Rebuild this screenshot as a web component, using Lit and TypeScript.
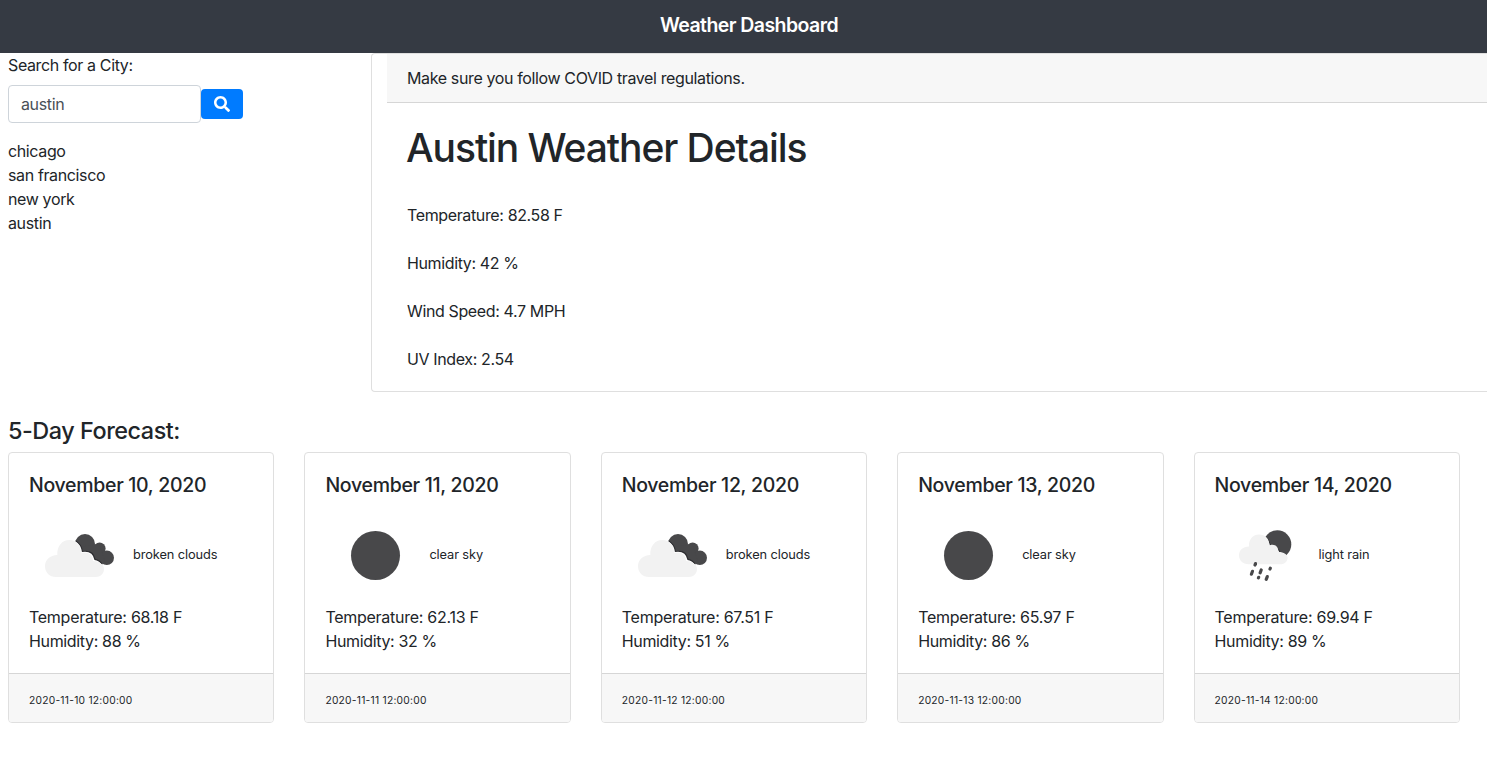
import { LitElement, html, css, svg } from "lit";
import { customElement, property } from "lit/decorators.js";

interface Day {
  title: string;
  icon: string;
  sky: string;
  temp: string;
  humidity: string;
  stamp: string;
}

const DAYS: Day[] = [
  { title: "November 10, 2020", icon: "broken", sky: "broken clouds", temp: "68.18", humidity: "88", stamp: "2020-11-10 12:00:00" },
  { title: "November 11, 2020", icon: "clear", sky: "clear sky", temp: "62.13", humidity: "32", stamp: "2020-11-11 12:00:00" },
  { title: "November 12, 2020", icon: "broken", sky: "broken clouds", temp: "67.51", humidity: "51", stamp: "2020-11-12 12:00:00" },
  { title: "November 13, 2020", icon: "clear", sky: "clear sky", temp: "65.97", humidity: "86", stamp: "2020-11-13 12:00:00" },
  { title: "November 14, 2020", icon: "rain", sky: "light rain", temp: "69.94", humidity: "89", stamp: "2020-11-14 12:00:00" },
];

const ICONS: Record<string, unknown> = {
  clear: svg`<circle cx="50.5" cy="50.5" r="24.5" fill="#48484a" />`,
  broken: svg`
    <g fill="#48484a">
      <circle cx="56" cy="39" r="10" />
      <circle cx="70.6" cy="43.4" r="6" />
      <circle cx="77.8" cy="52.8" r="7.2" />
      <path d="M50 42L70 39L77 59L64 58Z" />
    </g>
    <path fill="#2d2d30" d="M46.6 35.3Q52.8 39 53.8 46Q64.5 44 66.5 54Q70.5 54.5 73.800 59.200L62 60L45 48Z" />
    <path fill="#fff" d="M46.2 36.2Q52 39.500 52.900 47Q63.6 45.2 65.500 55Q70 55.500 73 60L60 64L42 48Z" />
    <path fill="#f2f2f2" d="M27 72C20.500 72 16 67.300 16 61.200C16 55 21 50.200 28.300 50C28 41 33 35 40.500 35C47.500 35 52.300 40.500 52.400 48.300C58.500 45.500 64 49.500 64 56C70 56 75 59.500 75 64C75 68.500 71.500 72 66.500 72Z" />`,
  rain: svg`
    <circle cx="62.300" cy="39.300" r="14" fill="#48484a" />
    <path fill="#2d2d30" d="M51 31.500Q55.500 36 56 43Q64 40.500 66 48.700Q70 49 72.200 53L62 56L48 47Z" />
    <path fill="#fff" d="M50.500 32Q54.800 36.500 55.300 44Q63.300 41.500 65.300 49.800Q70.500 50 73 55L62 60L46 47Z" />
    <path fill="#f2f2f2" d="M33.500 59.300C28 59.300 24 55.500 24 50.300C24 45.200 28 41.500 34 41.500C33.500 34.500 38 29.500 44 29.500C50.500 29.500 54.300 34 54.500 40.300C59.500 38.300 63.500 41.200 63.500 47C69 47 72.500 49.500 72.500 53C72.500 56.500 69.500 59.300 65.500 59.300Z" />
    <g stroke="#48484a" stroke-width="3.200" stroke-linecap="round">
      <path d="M40.500 58.600L40 60" />
      <path d="M37.500 66.300L36.400 69.200" />
      <path d="M46.200 65L45.100 67.800" />
      <path d="M43.700 72.300L43.400 72.900" />
      <path d="M55.300 63.200L55 64" />
      <path d="M52.300 71.600L51.200 74.300" />
    </g>`,
};

@customElement("forecast-card")
export class ForecastCard extends LitElement {
  @property({ attribute: false }) day!: Day;

  static styles = css`
    :host {
      display: flex;
      flex-direction: column;
      box-sizing: border-box;
      height: 271px;
      border: 1px solid #dfdfdf;
      border-radius: 4px;
      overflow: hidden;
      background: #fff;
    }
    .body {
      height: 220px;
      box-sizing: border-box;
      padding: 20px 20px 0;
    }
    .title {
      margin: 0 0 8px;
      font-size: 19.5px;
      line-height: 24px;
      font-weight: 550;
      letter-spacing: -0.3px;
      white-space: nowrap;
    }
    .sky {
      display: flex;
      align-items: center;
      height: 100px;
      gap: 4px;
      font-size: 12.8px;
      letter-spacing: -0.11px;
    }
    .icon {
      width: 100px;
      height: 100px;
      flex: none;
    }
    .line {
      line-height: 24px;
      letter-spacing: -0.27px;
    }
    .humid {
      letter-spacing: -0.35px;
    }
    .foot {
      flex: 1;
      box-sizing: border-box;
      border-top: 1px solid #d6d6d6;
      background: #f7f7f7;
      padding: 14px 20px 0;
      font-size: 10.24px;
      line-height: 24px;
      letter-spacing: 0.25px;
    }
  `;

  render() {
    const d = this.day;
    return html`
      <div class="body">
        <h5 class="title">${d.title}</h5>
        <div class="sky">
          <svg class="icon" viewBox="0 0 100 100">${ICONS[d.icon]}</svg>
          <span>${d.sky}</span>
        </div>
        <div class="line">Temperature: ${d.temp} F</div>
        <div class="line humid">Humidity: ${d.humidity} %</div>
      </div>
      <div class="foot">${d.stamp}</div>
    `;
  }
}

@customElement("app-root")
export class AppRoot extends LitElement {
  static styles = css`
    :host {
      display: block;
      height: 782px;
      overflow: hidden;
      background: #fff;
      color: #212529;
      font-family: Inter, "Liberation Sans", sans-serif;
      font-size: 16px;
      line-height: 24px;
      letter-spacing: -0.37px;
    }
    .nav {
      height: 53px;
      box-sizing: border-box;
      padding-top: 10px;
      background: #353a43;
      color: #fff;
      text-align: center;
      font-size: 19.5px;
      line-height: 30px;
      font-weight: 600;
      padding-left: 11px;
      letter-spacing: -0.56px;
    }
    .top {
      display: grid;
      grid-template-columns: 363px 1fr;
      padding-left: 8px;
      height: 339px;
    }
    .search {
      display: flex;
      align-items: center;
      margin: 8px 0 16px;
    }
    .field {
      width: 193px;
      height: 38px;
      box-sizing: border-box;
      border: 1px solid #ced4da;
      border-radius: 4px;
      padding: 6px 12px;
      font: inherit;
      letter-spacing: inherit;
      color: #495057;
      background: #fff;
      outline: none;
    }
    .go {
      display: flex;
      align-items: center;
      justify-content: center;
      width: 42px;
      height: 30px;
      border: 0;
      padding: 0;
      border-radius: 4px;
      background: #007bff;
    }
    .glass {
      width: 16px;
      height: 16px;
      display: block;
    }
    .details {
      border: 1px solid #dfdfdf;
      border-right: 0;
      border-radius: 4px 0 0 4px;
      padding-left: 15px;
    }
    .notice {
      background: #f7f7f7;
      border-bottom: 1px solid #d6d6d6;
      padding: 12px 20px;
    }
    .info {
      padding: 20px;
    }
    .city {
      margin: 0 0 31px -1px;
      padding-top: 1px;
      font-size: 39px;
      line-height: 48px;
      font-weight: 550;
      letter-spacing: -1.08px;
    }
    .stat {
      margin-bottom: 24px;
    }
    .stat:last-child {
      margin-bottom: 0;
    }
    .heading {
      margin: 24px 0 7px 8px;
      font-size: 23.4px;
      line-height: 29px;
      font-weight: 550;
      letter-spacing: -0.46px;
    }
    .days {
      display: grid;
      grid-template-columns: repeat(5, 266.4px);
      gap: 30px;
      padding-left: 8px;
    }
  `;

  render() {
    return html`
      <header class="nav">Weather Dashboard</header>
      <main>
        <div class="top">
          <aside>
            <div>Search for a City:</div>
            <div class="search">
              <input class="field" type="text" .value=${"austin"} />
              <button class="go" aria-label="Search">
                <svg class="glass" viewBox="0 0 512 512" fill="#fff">
                  <path d="M505 442.700L405.300 343c-4.500-4.500-10.600-7-17-7H372c27.600-35.300 44-79.700 44-128C416 93.100 322.900 0 208 0S0 93.100 0 208s93.100 208 208 208c48.300 0 92.700-16.400 128-44v16.300c0 6.400 2.500 12.500 7 17l99.700 99.700c9.400 9.400 24.600 9.400 33.900 0l28.300-28.300c9.400-9.400 9.400-24.600.1-34zM208 336c-70.700 0-128-57.200-128-128 0-70.700 57.200-128 128-128 70.700 0 128 57.200 128 128 0 70.700-57.200 128-128 128z" />
                </svg>
              </button>
            </div>
            ${["chicago", "san francisco", "new york", "austin"].map((c) => html`<div>${c}</div>`)}
          </aside>
          <section class="details">
            <div class="notice">Make sure you follow COVID travel regulations.</div>
            <div class="info">
              <h1 class="city">Austin Weather Details</h1>
              <div class="stat">Temperature: 82.58 F</div>
              <div class="stat">Humidity: 42 %</div>
              <div class="stat">Wind Speed: 4.7 MPH</div>
              <div class="stat">UV Index: 2.54</div>
            </div>
          </section>
        </div>
        <h4 class="heading">5-Day Forecast:</h4>
        <div class="days">
          ${DAYS.map((d) => html`<forecast-card .day=${d}></forecast-card>`)}
        </div>
      </main>
    `;
  }
}
